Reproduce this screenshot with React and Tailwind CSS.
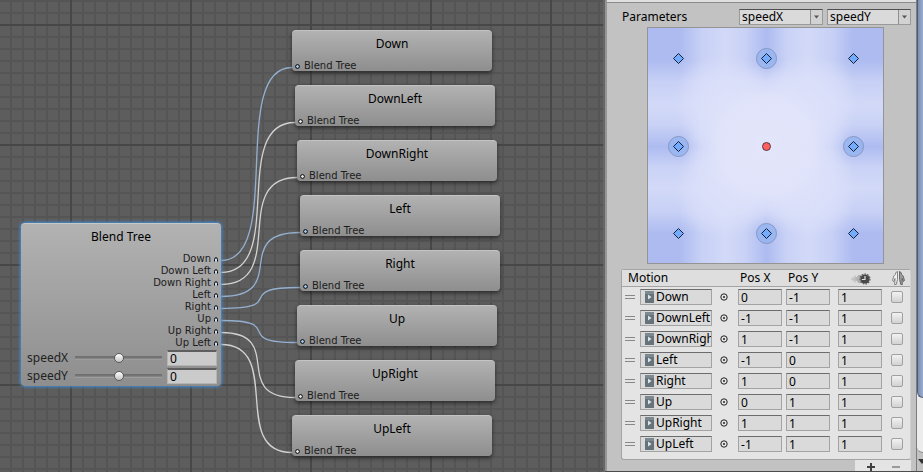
import React from "react";

const TARGETS = [
  { name: "Down", x: 292, y: 30, active: true },
  { name: "DownLeft", x: 295, y: 85, active: false },
  { name: "DownRight", x: 297, y: 140, active: false },
  { name: "Left", x: 300, y: 195, active: true },
  { name: "Right", x: 300, y: 250, active: true },
  { name: "Up", x: 297, y: 305, active: true },
  { name: "UpRight", x: 295, y: 360, active: false },
  { name: "UpLeft", x: 292, y: 415, active: false },
];

const OUTPUTS = ["Down", "Down Left", "Down Right", "Left", "Right", "Up", "Up Right", "Up Left"];

const MOTIONS = [
  ["Down", "0", "-1"],
  ["DownLeft", "-1", "-1"],
  ["DownRight", "1", "-1"],
  ["Left", "-1", "0"],
  ["Right", "1", "0"],
  ["Up", "0", "1"],
  ["UpRight", "1", "1"],
  ["UpLeft", "-1", "1"],
];

function Grid() {
  return (
    <svg className="absolute inset-0 h-full w-full" aria-hidden="true">
      <defs>
        <pattern id="minor" width="12" height="12" patternUnits="userSpaceOnUse">
          <rect x="10" width="2" height="12" fill="#555555" />
          <rect y="0" width="12" height="2" fill="#555555" />
        </pattern>
        <pattern id="major" width="120" height="120" patternUnits="userSpaceOnUse">
          <rect x="70" width="2" height="120" fill="#474747" />
          <rect y="24" width="120" height="2" fill="#474747" />
        </pattern>
      </defs>
      <rect width="100%" height="100%" fill="url(#minor)" />
      <rect width="100%" height="100%" fill="url(#major)" />
    </svg>
  );
}

function Wires() {
  return (
    <svg className="absolute inset-0 h-full w-full" fill="none" strokeWidth="1.3" aria-hidden="true">
      {TARGETS.map((t, i) => {
        const y0 = 260.5 + i * 12;
        const y1 = t.y + 37.5;
        const bend = (t.x - 221) * 0.89;
        return (
          <path
            key={t.name}
            d={`M221 ${y0}C${221 + bend} ${y0} ${t.x - bend} ${y1} ${t.x} ${y1}`}
            stroke={t.active ? "#94b0d0" : "#d2d2d2"}
          />
        );
      })}
    </svg>
  );
}

function MotionNode({ node }) {
  return (
    <div
      className="absolute flex h-[41px] w-[200px] flex-col justify-between rounded-[4px] border-t border-[#c4c4c4] bg-linear-to-b from-[#b2b2b2] to-[#8e8e8e] shadow-[0_2px_4px_rgba(0,0,0,0.55)]"
      style={{ left: node.x, top: node.y }}
    >
      <div className="pt-[5px] text-center text-[12px] leading-4">{node.name}</div>
      <div className="flex items-center gap-1 pl-[3px] font-['DejaVu_Sans',sans-serif] text-[10px] leading-[10px] text-[#1c1c1c]">
        <svg className="h-[5px] w-[5px]" viewBox="0 0 5 5" aria-hidden="true">
          <circle cx="2.5" cy="2.5" r="1.9" fill={node.active ? "#a8cdf5" : "#eeeeee"} stroke="#000" strokeWidth="1" />
        </svg>
        Blend Tree
      </div>
    </div>
  );
}

function Speed({ name }) {
  return (
    <div className="flex h-[18px] items-center pl-[6px] pr-1">
      <label htmlFor={"r" + name} className="w-12 text-[12px] leading-4 text-[#222]">
        {name}
      </label>
      <input
        id={"r" + name}
        type="range"
        min="-1"
        max="1"
        step="0.1"
        defaultValue="0"
        className="h-[10px] w-[87px] appearance-none bg-[linear-gradient(#6c6c6c,#787878_50%,#a9a9a9)] bg-[length:100%_4px] bg-center bg-no-repeat [&::-webkit-slider-thumb]:h-[10px] [&::-webkit-slider-thumb]:w-[10px] [&::-webkit-slider-thumb]:appearance-none [&::-webkit-slider-thumb]:rounded-full [&::-webkit-slider-thumb]:border [&::-webkit-slider-thumb]:border-[#5a5a5a] [&::-webkit-slider-thumb]:bg-linear-to-b [&::-webkit-slider-thumb]:from-white [&::-webkit-slider-thumb]:to-[#c4c4c4]"
      />
      <input
        aria-label={name + " value"}
        defaultValue="0"
        className="ml-auto h-4 w-[50px] border border-t-2 border-[#b4b4b4] border-t-[#5e5e5e] bg-[#cbcbcb] px-[2px] text-[12px] leading-3"
      />
    </div>
  );
}

function RootNode() {
  return (
    <section className="absolute left-[21px] top-[223px] w-[200px] rounded-[4px] border-t border-[#c8c8c8] bg-linear-to-b from-[#b2b2b2] to-[#8e8e8e] pb-px shadow-[0_0_3px_1px_#3f8cdc]">
      <h2 className="pb-[8px] pt-[5px] text-center text-[12px] leading-4">Blend Tree</h2>
      <ul className="flex flex-col pr-[3px]">
        {OUTPUTS.map((o) => (
          <li
            key={o}
            className="flex h-3 items-center justify-end gap-[3px] font-['DejaVu_Sans',sans-serif] text-[10px] leading-3 text-[#1c1c1c]"
          >
            {o}
            <svg className="h-[5px] w-[4px]" viewBox="0 0 4 5" aria-hidden="true">
              <path d="M0.5 4.5V2.5A1.5 1.8 0 0 1 3.5 2.5V4.5" fill="#c8dcf4" stroke="#000" strokeWidth="1" />
            </svg>
          </li>
        ))}
      </ul>
      <div className="flex flex-col">
        <Speed name="speedX" />
        <Speed name="speedY" />
      </div>
    </section>
  );
}

function ParamSelect({ value, label }) {
  return (
    <div className="flex h-4 w-[84px] border border-[#9a9a9a] border-t-[#4e4e4e] bg-[#dadada]">
      <select
        aria-label={label}
        defaultValue={value}
        className="min-w-0 flex-1 appearance-none bg-transparent pl-[2px] text-[12px] leading-[14px]"
      >
        <option>speedX</option>
        <option>speedY</option>
      </select>
      <svg className="h-[14px] w-[12px] border-l border-[#8e8e8e] bg-[#d2d2d2]" viewBox="0 0 11 14" aria-hidden="true">
        <path d="M3 5.5H8L5.5 8.5Z" fill="#555" />
      </svg>
    </div>
  );
}

const COORDS = [31, 119, 206];

function BlendMap() {
  return (
    <svg className="ml-[26px] h-[237px] w-[237px]" viewBox="0 0 237 237" role="img" aria-label="Blend space">
      <defs>
        <linearGradient id="bandX">
          <stop offset="0.14" stopColor="#dde2fa" stopOpacity="0" />
          <stop offset="0.23" stopColor="#dde2fa" stopOpacity="0.55" />
          <stop offset="0.33" stopColor="#dde2fa" stopOpacity="0.78" />
          <stop offset="0.41" stopColor="#dde2fa" stopOpacity="0.6" />
          <stop offset="0.505" stopColor="#dde2fa" stopOpacity="0" />
          <stop offset="0.59" stopColor="#dde2fa" stopOpacity="0.6" />
          <stop offset="0.68" stopColor="#dde2fa" stopOpacity="0.78" />
          <stop offset="0.78" stopColor="#dde2fa" stopOpacity="0.55" />
          <stop offset="0.87" stopColor="#dde2fa" stopOpacity="0" />
        </linearGradient>
        <linearGradient id="bandY" href="#bandX" x1="0" y1="0" x2="0" y2="1" />
        <radialGradient id="core">
          <stop offset="0" stopColor="#e4e6fa" />
          <stop offset="0.6" stopColor="#e1e4fa" stopOpacity="0.9" />
          <stop offset="0.8" stopColor="#dde1fa" stopOpacity="0.5" />
          <stop offset="1" stopColor="#dde1fa" stopOpacity="0" />
        </radialGradient>
        <radialGradient id="lobe">
          <stop offset="0" stopColor="#dce0fa" stopOpacity="0.8" />
          <stop offset="0.5" stopColor="#dce0fa" stopOpacity="0.5" />
          <stop offset="1" stopColor="#dce0fa" stopOpacity="0" />
        </radialGradient>
      </defs>
      <rect width="237" height="237" fill="#adbbf0" />
      <rect width="237" height="237" fill="url(#bandX)" />
      <rect width="237" height="237" fill="url(#bandY)" />
      {[[76, 76], [162, 76], [76, 162], [162, 162]].map(([x, y]) => (
        <circle key={x + "-" + y} cx={x} cy={y} r="50" fill="url(#lobe)" />
      ))}
      <circle cx="119" cy="119" r="80" fill="url(#core)" />
      <rect x="0.5" y="0.5" width="236" height="236" fill="none" stroke="#949494" />
      {COORDS.map((y, j) =>
        COORDS.map((x, i) => {
          if (i === 1 && j === 1) {
            return <circle key="centre" cx={x + 0.5} cy={y + 0.5} r="4" fill="#ff5f5f" stroke="#553c48" />;
          }
          return (
            <g key={i + "-" + j}>
              {(i + j) % 2 === 1 && (
                <circle cx={x + 0.5} cy={y + 0.5} r="10" fill="#8fb2f2" fillOpacity="0.7" stroke="#8797c2" />
              )}
              <path
                d={`M${x + 0.5} ${y - 4.5}L${x + 5.5} ${y + 0.5}L${x + 0.5} ${y + 5.5}L${x - 4.5} ${y + 0.5}Z`}
                fill="#75abfc"
                stroke="#142238"
              />
            </g>
          );
        })
      )}
    </svg>
  );
}

function TimeIcon() {
  return (
    <svg className="mt-px h-3 w-[22px]" viewBox="0 0 22 12" aria-label="Time scale" role="img">
      <path d="M0.5 6L6 2V10Z" fill="#c6c6c6" />
      <path d="M4 6L10 1.5V10.5Z" fill="#b9b9b9" />
      <path d="M8 2H12V10H8L6 6Z" fill="#b2b2b2" />
      <circle cx="15" cy="6" r="4.6" fill="#484848" />
      <circle cx="15" cy="6" r="5" fill="none" stroke="#555" strokeWidth="1.2" strokeDasharray="1.6 1.2" />
      <path d="M15 3V6.5H11.8" fill="none" stroke="#e0e0e0" strokeWidth="1.2" />
    </svg>
  );
}

function MirrorIcon() {
  return (
    <svg className="h-[14px] w-[13px]" viewBox="0 0 13 14" aria-label="Mirror" role="img">
      <path d="M5.5 0.5L3.8 1.6L3.4 3.4L1.8 5L0.5 9.5L1.6 10.5L3 7.5L2.6 13.5H4.2L5.5 8.5Z" fill="#efefef" stroke="#6a6a6a" strokeWidth="0.8" />
      <path d="M7.5 0.5L9.2 1.6L9.6 3.4L11.2 5L12.5 9.5L11.4 10.5L10 7.5L10.4 13.5H8.8L7.5 8.5Z" fill="#9c9c9c" stroke="#555" strokeWidth="0.8" />
      <path d="M6.5 1V13" stroke="#e8e8e8" />
    </svg>
  );
}

const FIELD =
  "block h-4 w-[44px] border border-[#a3a3a3] border-t-[#6c6c6c] bg-[#dadada] px-[2px] text-[12px] leading-[14px]";

function MotionRow({ motion }) {
  const [name, px, py] = motion;
  return (
    <tr className="h-[21px]">
      <td className="p-0 pl-[3px]">
        <svg className="mt-px h-[5px] w-[10px]" viewBox="0 0 10 5" aria-hidden="true">
          <path d="M0 .5H10M0 3.5H10" stroke="#888" />
        </svg>
      </td>
      <td className="p-0">
        <div className="flex h-4 w-[72px] items-center gap-px overflow-hidden border border-[#a3a3a3] border-t-[#6c6c6c] bg-[#dadada] pl-1">
          <svg className="h-3 w-[9px] shrink-0" viewBox="0 0 9 12" aria-hidden="true">
            <rect width="9" height="12" rx="0.5" fill="#66737b" />
            <rect width="9" height="3" fill="#7d8990" />
            <path d="M3 3.5L6.5 6L3 8.5Z" fill="#dbe6e8" />
          </svg>
          <input
            aria-label="Motion"
            defaultValue={name}
            className="h-[14px] w-full min-w-0 bg-transparent pl-px text-[12px] leading-[14px]"
          />
        </div>
      </td>
      <td className="p-0">
        <button aria-label="Pick motion" className="ml-[5px] block h-[8px] w-[8px]">
          <svg className="h-[8px] w-[8px]" viewBox="0 0 8 8" aria-hidden="true">
            <circle cx="4" cy="4" r="3.2" fill="none" stroke="#222" />
            <circle cx="4" cy="4" r="0.9" fill="#111" />
          </svg>
        </button>
      </td>
      <td className="p-0">
        <input aria-label="Pos X" defaultValue={px} className={FIELD} />
      </td>
      <td className="p-0">
        <input aria-label="Pos Y" defaultValue={py} className={FIELD} />
      </td>
      <td className="p-0">
        <input aria-label="Time scale" defaultValue="1" className={FIELD} />
      </td>
      <td className="p-0">
        <input
          type="checkbox"
          aria-label="Mirror"
          className="block h-3 w-3 appearance-none rounded-[2px] border border-[#a0a0a0] bg-linear-to-b from-[#f2f2f2] to-[#d2d2d2]"
        />
      </td>
    </tr>
  );
}

function MotionList() {
  return (
    <div className="mt-[5px]">
      <div className="rounded-[3px] border border-[#a4a4a4] border-r-[#d0d0d0] bg-[#e4e4e4] pb-1">
        <table className="w-full table-fixed border-collapse text-left">
          <colgroup>
            <col className="w-[18px]" />
            <col className="w-[75px]" />
            <col className="w-[23px]" />
            <col className="w-[48px]" />
            <col className="w-[52px]" />
            <col className="w-[53px]" />
            <col />
          </colgroup>
          <thead className="text-[12px] leading-4">
            <tr className="h-4 border-b border-[#a4a4a4] bg-[#dedede]">
              <th className="p-0 pl-[6px] font-normal" colSpan={3}>Motion</th>
              <th className="p-0 pl-[2px] font-normal">Pos X</th>
              <th className="p-0 pl-[2px] font-normal">Pos Y</th>
              <th className="p-0 pl-[12px]"><TimeIcon /></th>
              <th className="p-0 pl-px"><MirrorIcon /></th>
            </tr>
          </thead>
          <tbody>
            {MOTIONS.map((m) => (
              <MotionRow key={m[0]} motion={m} />
            ))}
          </tbody>
        </table>
      </div>
      <div className="ml-auto flex h-[11px] w-14 items-end justify-between overflow-hidden bg-[#e4e4e4] pl-3 pr-[11px]">
        <button aria-label="Add motion" className="h-[8px] w-[8px]">
          <svg className="h-[8px] w-[8px]" viewBox="0 0 8 8" aria-hidden="true">
            <path d="M4 0V8M0 4H8" stroke="#404040" strokeWidth="2" />
          </svg>
        </button>
        <button aria-label="Remove motion" className="h-[8px] w-[8px]">
          <svg className="h-[8px] w-[8px]" viewBox="0 0 8 8" aria-hidden="true">
            <path d="M0 4H8" stroke="#9a9a9a" strokeWidth="2" />
          </svg>
        </button>
      </div>
    </div>
  );
}

function Inspector() {
  return (
    <aside className="flex w-[320px] shrink-0 flex-col border-l-2 border-[#666] bg-[#c2c2c2]">
      <div className="flex flex-1 border-l-2 border-[#969696]">
        <div className="flex min-w-0 flex-1 flex-col">
          <div className="h-[3px] border-b border-[#8a8a8a] bg-[#e0e0e0]" />
          <div className="pl-[14px] pr-[5px]">
            <div className="flex h-6 items-center gap-1 pt-[4px]">
              <span className="flex-1 pl-px text-[12px] leading-4">Parameters</span>
              <ParamSelect value="speedX" label="Horizontal parameter" />
              <ParamSelect value="speedY" label="Vertical parameter" />
            </div>
            <BlendMap />
            <MotionList />
          </div>
        </div>
        <div className="flex w-[7px] flex-col border-l border-[#7c7c7c] bg-[#c2c2c2]" aria-hidden="true">
          <div className="flex flex-1 flex-col overflow-hidden rounded-bl-[6px] border-b border-[#888] bg-[#ececec]">
            <div className="h-[398px] rounded-bl-[6px] border-b border-l border-[#4c5c78] bg-linear-to-r from-[#7b8fb5] to-[#9aaccd]" />
          </div>
          <svg className="h-[18px] w-[6px]" viewBox="0 0 6 18">
            <path d="M1 6H9L5 11Z" fill="#333" />
          </svg>
        </div>
      </div>
      <div className="flex h-[3px] border-t border-[#4c4c4c] bg-[#888]">
        <div className="ml-[171px] h-full w-6 bg-[#555]" />
      </div>
    </aside>
  );
}

export default function App() {
  return (
    <div className="flex min-h-screen overflow-hidden bg-[#5d5d5d] font-['Noto_Sans','Open_Sans',sans-serif] text-black">
      <main className="relative min-w-0 flex-1 overflow-hidden bg-[#5d5d5d]">
        <Grid />
        <Wires />
        {TARGETS.map((t) => (
          <MotionNode key={t.name} node={t} />
        ))}
        <RootNode />
      </main>
      <Inspector />
    </div>
  );
}
